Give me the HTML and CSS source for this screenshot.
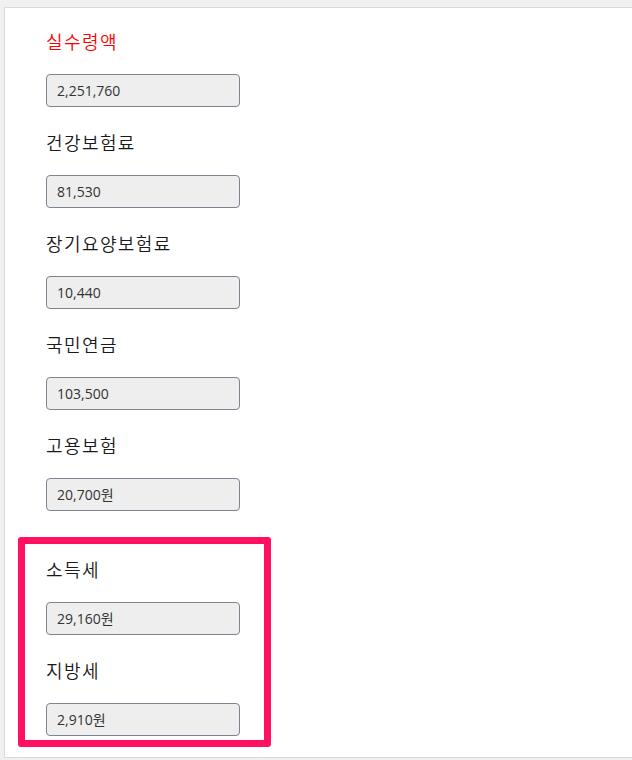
FILE: index.html
```html
<!DOCTYPE html>
<html lang="ko">
<head>
<meta charset="utf-8">
<link rel="stylesheet" href="styles.css">
</head>
<body>
<div class="panel">
  <div class="field">
    <div class="label label-red">실수령액</div>
    <div class="box">2,251,760</div>
  </div>
  <div class="field">
    <div class="label">건강보험료</div>
    <div class="box">81,530</div>
  </div>
  <div class="field">
    <div class="label">장기요양보험료</div>
    <div class="box">10,440</div>
  </div>
  <div class="field">
    <div class="label">국민연금</div>
    <div class="box">103,500</div>
  </div>
  <div class="field">
    <div class="label">고용보험</div>
    <div class="box">20,700원</div>
  </div>
  <div class="highlight">
    <div class="field">
      <div class="label">소득세</div>
      <div class="box">29,160원</div>
    </div>
    <div class="field last">
      <div class="label">지방세</div>
      <div class="box">2,910원</div>
    </div>
  </div>
</div>
</body>
</html>
```
FILE: styles.css
```css
html, body {
  margin: 0;
  padding: 0;
  background: #f0f0f0;
  height: 760px;
  overflow: hidden;
}
body {
  padding: 7px 0 0 4px;
  box-sizing: border-box;
  font-family: "Noto Sans CJK KR", "Noto Sans", sans-serif;
}
.panel {
  background: #fff;
  border: 1px solid #d9d9d9;
  border-right: none;
  width: 628px;
  height: 751px;
  box-sizing: border-box;
  padding: 21px 0 0 41px;
}
.field {
  display: flex;
  flex-direction: column;
  align-items: flex-start;
  margin-bottom: 23px;
}
.field:nth-child(5) {
  margin-bottom: 26px;
}
.label {
  font-size: 18px;
  font-weight: 350;
  letter-spacing: 1.4px;
  line-height: 24px;
  height: 24px;
  color: #1a1a1a;
  margin-bottom: 21px;
}
.label-red {
  color: #ff0000;
}
.box {
  width: 194px;
  height: 33px;
  box-sizing: border-box;
  border: 1px solid #7d8591;
  border-radius: 4px;
  background: #eeeeee;
  font-family: "Open Sans", "Noto Sans CJK KR", sans-serif;
  font-size: 14px;
  line-height: 31px;
  color: #333;
  padding-left: 10px;
}
.highlight {
  margin-left: -28px;
  width: 253px;
  box-sizing: border-box;
  border: 7px solid #ff1060;
  border-radius: 3px;
  padding: 13px 0 4px 21px;
}
.field.last {
  margin-bottom: 0;
}
```
